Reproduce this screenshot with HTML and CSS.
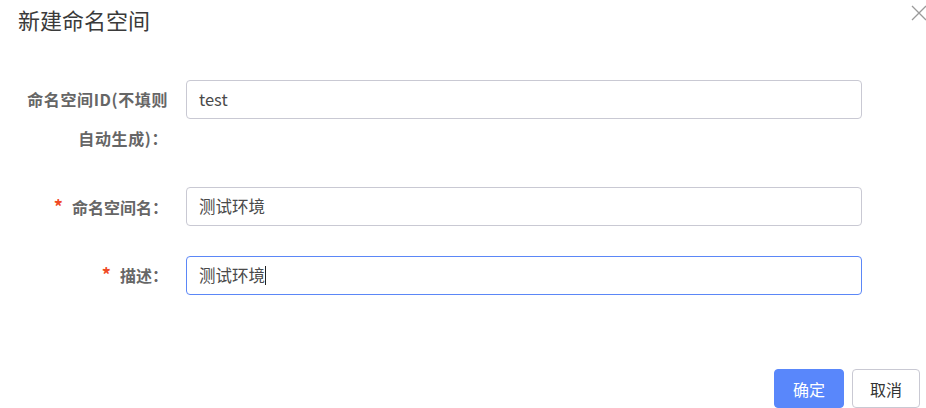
FILE: index.html
```html
<!DOCTYPE html>
<html lang="zh-CN">
<head>
<meta charset="utf-8">
<title>新建命名空间</title>
<link rel="stylesheet" href="styles.css">
</head>
<body>
<div class="dialog">
  <div class="header">
    <div class="title">新建命名空间</div>
    <svg class="close" viewBox="0 0 16 16" width="16" height="16"><path d="M1 1 L15 15 M15 1 L1 15" stroke="#9a9a9a" stroke-width="1.3" fill="none"/></svg>
  </div>
  <div class="form">
    <div class="label wide">命名空间ID(不填则自动生成)：</div>
    <div class="field">test</div>
    <div class="label"><span class="req">*</span>命名空间名：</div>
    <div class="field">测试环境</div>
    <div class="label"><span class="req">*</span>描述：</div>
    <div class="field focus last">测试环境<span class="caret"></span></div>
  </div>
  <div class="footer">
    <button class="btn primary">确定</button>
    <button class="btn">取消</button>
  </div>
</div>
</body>
</html>
```
FILE: styles.css
```css
html, body {
  margin: 0;
  padding: 0;
  background: #fff;
}
body {
  font-family: "Noto Sans CJK SC", "Noto Sans", sans-serif;
  width: 926px;
  height: 408px;
  overflow: hidden;
}
.dialog {
  display: flex;
  flex-direction: column;
}
.header {
  display: flex;
  justify-content: space-between;
  align-items: flex-start;
  padding: 3px 0 0 18px;
  height: 80px;
  box-sizing: border-box;
}
.title {
  font-size: 22px;
  line-height: 32px;
  color: #3a3a3a;
}
.close {
  margin-top: 2px;
  margin-right: -1px;
}
.form {
  display: grid;
  grid-template-columns: 150px 676px;
  grid-template-rows: 78px 39px 39px;
  column-gap: 18px;
  row-gap: 29px;
  padding-left: 18px;
  align-items: start;
}
.field.last {
  margin-top: 1px;
}
.label {
  font-size: 16px;
  font-weight: bold;
  color: #666;
  line-height: 39px;
  text-align: right;
}
.label.wide {
  letter-spacing: 0.6px;
}
.req {
  color: #f04a24;
  font-size: 18px;
  margin-right: 9px;
}
.field {
  height: 39px;
  box-sizing: border-box;
  border: 1px solid #c9c9d3;
  border-radius: 4px;
  padding: 0 12px;
  font-size: 16.5px;
  line-height: 37px;
  color: #4a4a4a;
  display: flex;
  align-items: center;
}
.field.focus {
  border-color: #5b87f7;
}
.caret {
  display: inline-block;
  width: 1px;
  height: 19px;
  background: #222;
}
.footer {
  display: flex;
  justify-content: flex-end;
  gap: 8px;
  padding: 75px 6px 0 0;
}
.btn {
  height: 39px;
  width: 68px;
  border: 1px solid #c9c9d3;
  border-radius: 4px;
  background: #fff;
  color: #333;
  font-family: "Noto Sans CJK SC", sans-serif;
  font-size: 16px;
  padding: 0;
}
.btn.primary {
  width: 70px;
  background: #5987fb;
  border-color: #5987fb;
  color: #fff;
}
```
